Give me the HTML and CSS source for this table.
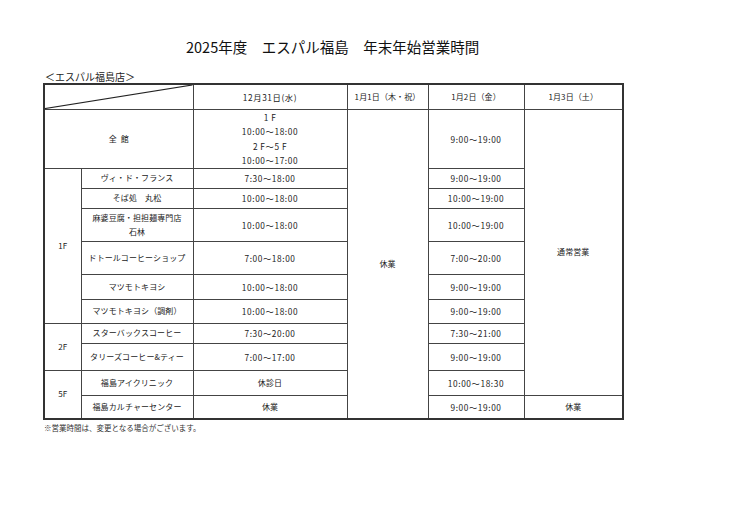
FILE: index.html
```html
<!DOCTYPE html>
<html lang="ja">
<head>
<meta charset="utf-8">
<link rel="stylesheet" href="styles.css">
</head>
<body>
<div class="page">
  <h1 class="title">2025年度　エスパル福島　年末年始営業時間</h1>
  <div class="store">＜エスパル福島店＞</div>
  <table class="hours">
    <colgroup>
      <col class="c-floor"><col class="c-name"><col class="c-d1"><col class="c-d2"><col class="c-d3"><col class="c-d4">
    </colgroup>
    <tr class="r-head">
      <td colspan="2" class="diag"><svg class="diag-line" viewBox="0 0 100 100" preserveAspectRatio="none"><line x1="0" y1="100" x2="100" y2="0" stroke="#222" stroke-width="1.2" vector-effect="non-scaling-stroke"/></svg></td>
      <td class="t">12月31日(水)</td>
      <td>1月1日（木・祝）</td>
      <td>1月2日（金）</td>
      <td>1月3日（土）</td>
    </tr>
    <tr class="r-all">
      <td colspan="2">全&nbsp;&nbsp;館</td>
      <td class="t multi">1&thinsp;F<br>10:00〜18:00<br>2&thinsp;F〜5&thinsp;F<br>10:00〜17:00</td>
      <td rowspan="11">休業</td>
      <td class="t">9:00〜19:00</td>
      <td rowspan="10">通常営業</td>
    </tr>
    <tr class="r-20">
      <td rowspan="6">1F</td>
      <td>ヴィ・ド・フランス</td>
      <td class="t">7:30〜18:00</td>
      <td class="t">9:00〜19:00</td>
    </tr>
    <tr class="r-20">
      <td>そば処　丸松</td>
      <td class="t">10:00〜18:00</td>
      <td class="t">10:00〜19:00</td>
    </tr>
    <tr class="r-33">
      <td>麻婆豆腐・担担麺専門店<br>石林</td>
      <td class="t">10:00〜18:00</td>
      <td class="t">10:00〜19:00</td>
    </tr>
    <tr class="r-33">
      <td>ドトールコーヒーショップ</td>
      <td class="t">7:00〜18:00</td>
      <td class="t">7:00〜20:00</td>
    </tr>
    <tr class="r-25">
      <td>マツモトキヨシ</td>
      <td class="t">10:00〜18:00</td>
      <td class="t">9:00〜19:00</td>
    </tr>
    <tr class="r-24">
      <td>マツモトキヨシ（調剤）</td>
      <td class="t">10:00〜18:00</td>
      <td class="t">9:00〜19:00</td>
    </tr>
    <tr class="r-20">
      <td rowspan="2">2F</td>
      <td>スターバックスコーヒー</td>
      <td class="t">7:30〜20:00</td>
      <td class="t">7:30〜21:00</td>
    </tr>
    <tr class="r-27">
      <td>タリーズコーヒー&amp;ティー</td>
      <td class="t">7:00〜17:00</td>
      <td class="t">9:00〜19:00</td>
    </tr>
    <tr class="r-25">
      <td rowspan="2">5F</td>
      <td>福島アイクリニック</td>
      <td>休診日</td>
      <td class="t">10:00〜18:30</td>
    </tr>
    <tr class="r-24">
      <td>福島カルチャーセンター</td>
      <td>休業</td>
      <td class="t">9:00〜19:00</td>
      <td>休業</td>
    </tr>
  </table>
  <p class="note">※営業時間は、変更となる場合がございます。</p>
</div>
</body>
</html>
```
FILE: styles.css
```css
html, body {
  margin: 0;
  padding: 0;
  background: #fff;
}
body {
  font-family: "Noto Sans CJK JP", "Noto Sans", sans-serif;
  color: #222;
}
.page {
  padding: 38px 0 0 43px;
}
.title {
  margin: 0 0 0 143px;
  font-size: 14.5px;
  font-weight: normal;
  line-height: 18px;
  color: #111;
}
.store {
  margin: 15px 0 0 2px;
  font-size: 10px;
  line-height: 12px;
  color: #222;
}
.hours {
  border-collapse: collapse;
  table-layout: fixed;
  width: 579px;
  border: 2px solid #333;
  font-size: 8px;
  line-height: 14px;
}
.c-floor { width: 37px; }
.c-name { width: 112px; }
.c-d1 { width: 154px; }
.c-d2 { width: 81px; }
.c-d3 { width: 96px; }
.c-d4 { width: 99px; }
.hours td {
  border: 1px solid #444;
  padding: 0;
  text-align: center;
  vertical-align: middle;
  white-space: nowrap;
  letter-spacing: 0.1px;
}
.hours td.t {
  letter-spacing: 0.6px;
  font-size: 8.3px;
}
.r-head { height: 25px; }
.r-all { height: 59px; }
.r-20 { height: 20px; }
.r-24 { height: 24px; }
.r-25 { height: 25px; }
.r-27 { height: 27px; }
.r-33 { height: 33px; }
.diag {
  position: relative;
}
.diag-line {
  position: absolute;
  left: 0;
  top: 0;
  width: 100%;
  height: 100%;
  display: block;
}
.multi {
  line-height: 14.5px;
}
.note {
  margin: 3px 0 0 1px;
  font-size: 7.5px;
  line-height: 10px;
  color: #333;
}
```
